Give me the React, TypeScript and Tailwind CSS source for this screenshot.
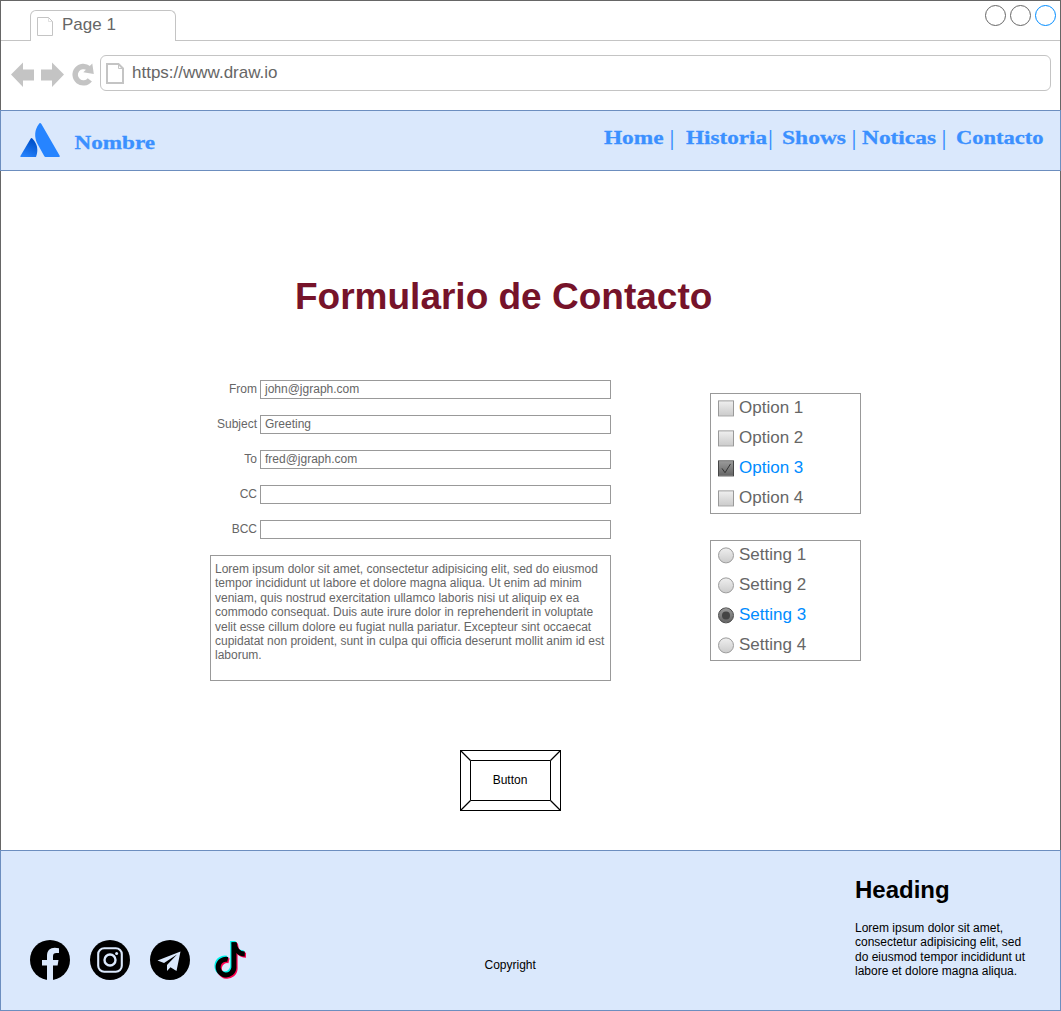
const nav = [
  { label: "Home", box: "w-[82px]", gap: "w-[60px]", bar: "w-[16px]", len: 59.5 },
  { label: "Historia", box: "w-[96px]", gap: "w-[81px]", bar: "w-[7px]", len: 81 },
  { label: "Shows", box: "w-[80px]", gap: "w-[64px]", bar: "w-[16px]", len: 64 },
  { label: "Noticas", box: "w-[94px]", gap: "w-[74px]", bar: "w-[16px]", len: 74 },
  { label: "Contacto", box: "w-[88px]", gap: "w-[88px]", bar: "", len: 87.5 },
];

const fields = [
  ["From", "john@jgraph.com"],
  ["Subject", "Greeting"],
  ["To", "fred@jgraph.com"],
  ["CC", ""],
  ["BCC", ""],
];

function PageIcon({ thick = false }: { thick?: boolean }) {
  return thick ? (
    <svg className="block h-[21px] w-[18px]" viewBox="0 0 18 21" fill="none" stroke="#c4c4c4">
      <path d="M1 1H12.5L17 5.5V20H1Z" strokeWidth="2" />
      <path d="M12.5 1V5.5H17" />
    </svg>
  ) : (
    <svg className="block h-[19px] w-[16px]" viewBox="0 0 16 19" fill="none" stroke="#c4c4c4">
      <path d="M.5 .5H11.5L15.5 4.5V18.5H.5Z" />
      <path d="M11.5 .5V4.5H15.5" strokeOpacity=".5" />
    </svg>
  );
}

function Browser() {
  return (
    <div className="h-[110px] border-x border-t border-[#666]">
      <div className="flex h-[40px] border-b border-[#c4c4c4]">
        <div className="mt-[9px] ml-[29px] flex h-[31px] w-[146px] rounded-t-[6px] border border-b-0 border-[#c4c4c4] bg-white">
          <div className="mt-[6px] ml-[6px]"><PageIcon /></div>
          <span className="ml-[9px] text-[17px] leading-[28px]">Page 1</span>
        </div>
        <svg className="mt-[3px] mr-[3px] ml-auto h-[23px] w-[73px]" viewBox="0 0 73 23" fill="none">
          <circle cx="11.5" cy="11.5" r="10" stroke="#666" />
          <circle cx="36.5" cy="11.5" r="10" stroke="#666" />
          <circle cx="61.5" cy="11.5" r="10" stroke="#008cff" />
        </svg>
      </div>
      <div className="flex pt-[14px]">
        <svg className="mt-[5px] ml-[9px] h-[30px] w-[90px]" viewBox="0 0 90 30">
          <path d="M1 14.5L13 2.5V9.5H24V20.5H13V27Z M54 14.5L42 2.5V9.5H31V20.5H42V27Z" fill="#c4c4c4" />
          <path d="M79.8 19.8A8.2 8.2 0 1 1 78.6 8.4" fill="none" stroke="#c4c4c4" strokeWidth="5.4" />
          <path d="M82.3 3.5L83.8 14L73.3 12.3Z" fill="#c4c4c4" />
        </svg>
        <div className="flex h-[36px] w-[951px] rounded-[6px] border border-[#c4c4c4]">
          <div className="mt-[7px] ml-[5px]"><PageIcon thick /></div>
          <span className="ml-[8px] text-[17px] leading-[33px]">https://www.draw.io</span>
        </div>
      </div>
    </div>
  );
}

function Header() {
  return (
    <header className="flex h-[61px] border border-[#6c8ebf] bg-[#dae8fc] font-['Liberation_Serif',serif] text-[19px] font-bold text-[#3b90ff]">
      <svg className="mt-[11px] ml-[19px] h-[36px] w-[41px]" viewBox="0 0 41 36">
        <defs>
          <linearGradient id="peak" x1="0.6" y1="0" x2="0.2" y2="1">
            <stop offset=".1" stopColor="#0052cc" />
            <stop offset="1" stopColor="#2684ff" />
          </linearGradient>
        </defs>
        <path d="M10.6 16.8Q11.4 15.4 12.6 16.8C17.5 22 18.6 28.5 16 35H1Q0 35 .4 34Z" fill="url(#peak)" />
        <path d="M18.9 2Q20 .2 21.4 2L39.7 33.8Q40.2 35 39 35H25.5Q24.7 35 24.2 34L17 21C14.4 15 14.3 8 18.9 2Z" fill="#2684ff" />
      </svg>
      <svg className="mt-[17px] ml-[13px] h-[30px] w-[84px]">
        <text x="0.5" y="21.3" textLength="80.5" lengthAdjust="spacingAndGlyphs" fill="currentColor" stroke="currentColor" strokeWidth=".3">Nombre</text>
      </svg>
      <nav className="mt-[12px] ml-auto mr-[16px] flex">
        {nav.map((n) => (
          <a key={n.label} className={"flex h-[30px] " + n.box}>
            <svg className={"h-[30px] overflow-visible " + n.gap}>
              <text x="0" y="21.3" textLength={n.len} lengthAdjust="spacingAndGlyphs" fill="currentColor" stroke="currentColor" strokeWidth=".3">{n.label}</text>
            </svg>
            {n.bar && <span className={"flex shrink-0 items-start justify-center pt-[1px] text-[20px] leading-[28px] " + n.bar}>|</span>}
          </a>
        ))}
      </nav>
    </header>
  );
}

function Check({ on }: { on: boolean }) {
  return (
    <span className={on ? "flex size-[16px] items-center justify-center border border-[#444] bg-linear-to-b from-[#999] to-[#666]" : "size-[16px] border border-[#999] bg-linear-to-b from-[#eee] to-[#ccc]"}>
      {on && <svg className="size-[14px] shrink-0" viewBox="0 0 14 14" fill="none" stroke="#333"><path d="M3 7L6 11.3L11.5 2.5" /></svg>}
    </span>
  );
}

function Radio({ on }: { on: boolean }) {
  return (
    <span className={on ? "flex size-[16px] items-center justify-center rounded-full border border-[#444] bg-linear-to-b from-[#999] to-[#666]" : "size-[16px] rounded-full border border-[#999] bg-linear-to-b from-[#eee] to-[#ccc]"}>
      {on && <span className="size-[8px] rounded-full bg-[#444]" />}
    </span>
  );
}

function Choices({ name, radio = false }: { name: string; radio?: boolean }) {
  return (
    <div className="h-[121px] w-[151px] border border-[#999]">
      {[1, 2, 3, 4].map((i) => (
        <div key={i} className={"flex h-[30px] pl-[7px] " + (i === 3 ? "text-[#008cff]" : "")}>
          <div className="mt-[6px] flex translate-y-[0.4px]">{radio ? <Radio on={i === 3} /> : <Check on={i === 3} />}</div>
          <span className="ml-[5px] text-[17px] leading-[28px]">{name} {i}</span>
        </div>
      ))}
    </div>
  );
}

function Note({ color, shift }: { color: string; shift: string }) {
  return (
    <g fill="none" stroke={color} strokeWidth="5" transform={shift}>
      <path d="M17.8 19.4A7.9 7.9 0 1 0 23.9 27.5V2.3" />
      <path d="M24.2 2.3C24.6 9.5 29 13.9 34.8 14" />
    </g>
  );
}

function Socials() {
  return (
    <div className="mt-[89px] ml-[29px] flex h-[40px] w-[220px] gap-[20px] text-black">
      <svg className="size-[40px]" viewBox="0 0 40 40">
        <circle cx="20" cy="20" r="20" />
        <path d="M17 40V25.6H12V20H17V16C17 10.5 20 7.8 24.8 7.8Q27 7.8 29 8.2V13H26.4Q23 13 23 16.2V20H28.5L27.6 25.6H23V40Z" fill="#dae8fc" />
      </svg>
      <svg className="size-[40px]" viewBox="0 0 40 40">
        <circle cx="20" cy="20" r="20" />
        <g fill="none" stroke="#dae8fc" strokeWidth="2.1">
          <rect x="8.2" y="8.2" width="23.6" height="23.6" rx="6" />
          <circle cx="20" cy="20" r="5.5" strokeWidth="2.4" />
        </g>
        <circle cx="26.6" cy="13.6" r="1.5" fill="#dae8fc" />
      </svg>
      <svg className="size-[40px]" viewBox="0 0 40 40">
        <circle cx="20" cy="20" r="20" />
        <path d="M30.5 11.5L7.5 20.5L14 23L27 14.5L17 25V31L20.5 27.2L26.5 31Z" fill="#dae8fc" />
      </svg>
      <svg className="size-[40px]" viewBox="0 0 40 40">
        <Note color="#00f2ea" shift="translate(-1.2 -1.2)" />
        <Note color="#ff004f" shift="translate(1.2 1.3)" />
        <Note color="#000" shift="translate(0 0)" />
      </svg>
    </div>
  );
}

export default function App() {
  return (
    <div className="flex h-[1011px] w-[1061px] flex-col bg-white font-['Liberation_Sans',Arial,sans-serif] text-[#666]">
      <Browser />
      <Header />
      <main className="h-[679px] border-x border-[#666]">
        <h1 className="ml-[294px] pt-[101px] text-[37px] leading-[50px] font-bold whitespace-nowrap text-[#76132a]">Formulario de Contacto</h1>
        <div className="mt-[58px] ml-[209px] flex gap-[99px]">
          <div className="w-[401px] text-[12px]">
            {fields.map(([label, value]) => (
              <div key={label} className="mb-[16px] flex h-[19px]">
                <label className="w-[50px] pr-[3px] text-right leading-[18px]">{label}</label>
                <div className="flex-1 border border-[#999] pl-[4px] leading-[16px]">{value}</div>
              </div>
            ))}
            <p className="h-[126px] border border-[#999] pt-[6px] pl-[4px] leading-[14.4px] whitespace-nowrap">
              Lorem ipsum dolor sit amet, consectetur adipisicing elit, sed do eiusmod<br />
              tempor incididunt ut labore et dolore magna aliqua. Ut enim ad minim<br />
              veniam, quis nostrud exercitation ullamco laboris nisi ut aliquip ex ea<br />
              commodo consequat. Duis aute irure dolor in reprehenderit in voluptate<br />
              velit esse cillum dolore eu fugiat nulla pariatur. Excepteur sint occaecat<br />
              cupidatat non proident, sunt in culpa qui officia deserunt mollit anim id est<br />
              laborum.
            </p>
          </div>
          <div className="mt-[13px] flex flex-col gap-[26px]">
            <Choices name="Option" />
            <Choices name="Setting" radio />
          </div>
        </div>
        <button className="relative mt-[69px] ml-[459px] flex h-[61px] w-[101px] items-center justify-center border border-black text-[12px] text-black">
          <svg className="absolute -top-px -left-px h-[61px] w-[101px]" viewBox="0 0 101 61" fill="none" stroke="#000">
            <path d="M10.5 10.5H90.5V50.5H10.5Z" />
            <path d="M.5 .5L10.5 10.5M100.5 .5L90.5 10.5M.5 60.5L10.5 50.5M100.5 60.5L90.5 50.5" strokeWidth="1.3" />
          </svg>
          <span className="pr-[1px] pb-[2px]">Button</span>
        </button>
      </main>
      <footer className="flex h-[161px] border border-[#6c8ebf] bg-[#dae8fc] text-[12px] text-black">
        <Socials />
        <p className="mt-[105px] ml-[234.5px] w-[370.5px] leading-[18px]">Copyright</p>
        <section>
          <h2 className="mt-[24px] text-[24px] leading-[29px] font-bold">Heading</h2>
          <p className="mt-[17px] leading-[14.4px] whitespace-nowrap">
            Lorem ipsum dolor sit amet,<br />consectetur adipisicing elit, sed<br />do eiusmod tempor incididunt ut<br />labore et dolore magna aliqua.
          </p>
        </section>
      </footer>
    </div>
  );
}
